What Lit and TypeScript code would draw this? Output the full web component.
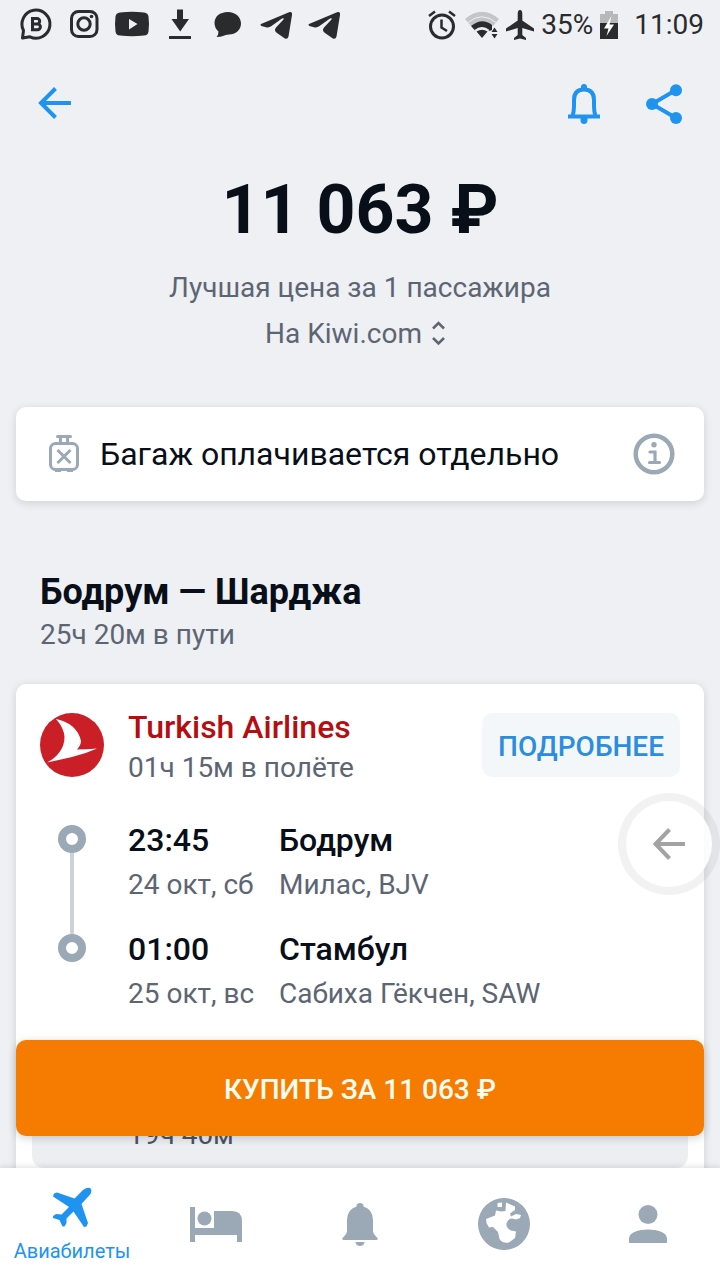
import { LitElement, html, css, svg } from "lit";
import { customElement } from "lit/decorators.js";

const icon = (w: number, h: number, body: unknown) =>
  html`<svg width=${w} height=${h} viewBox="0 0 ${w} ${h}" fill="currentColor" aria-hidden="true">${body}</svg>`;

const telegram = svg`<path d="M9 24 37 12.200Q40.500 11 40 15L36.500 36.500Q35.500 39.800 32.500 38.200L25 33Q21.500 30.500 24 27.500L31.500 19.500Q32.500 17.500 30 18.500L19.500 26Q17 28 14 27.200L9.500 26Q7.500 25 9 24Z"/>`;

const statusLeft = [
  svg`<path d="M10.500 38 11.500 30.500A14 14 0 1 1 18 36.800Z" fill="none" stroke="currentColor" stroke-width="3" stroke-linejoin="round"/>
      <path d="M20.500 18.500H25a2.700 2.700 0 0 1 0 5.400H20.500ZM20.500 23.900H25.500a2.900 2.900 0 0 1 0 5.800H20.500Z" fill="none" stroke="currentColor" stroke-width="3"/>`,
  svg`<rect x="11.500" y="11.500" width="25.500" height="25" rx="7" fill="none" stroke="currentColor" stroke-width="3"/>
      <circle cx="24" cy="24" r="6.200" fill="none" stroke="currentColor" stroke-width="3"/><circle cx="31.500" cy="16.500" r="1.800"/>`,
  svg`<path fill-rule="evenodd" d="M12 12.500Q24 11 36 12.500 40 13 40.500 16.500 41.500 24 40.500 31.500 40 35.300 36 35.600 24 36.700 12 35.600 8 35.300 7.500 31.500 6.500 24 7.500 16.500 8 13 12 12.500ZM21 19V29.500L29.500 24Z"/>`,
  svg`<path d="M21 9.500H27V19H33L24.200 31.500 15.500 19H21ZM13 36H35V39H13Z"/>`,
  svg`<path d="M24 12C31.500 12 37 17 37 23.500S31.500 34.500 25 34.500Q21.500 34.800 19 36 16.500 37 12.500 37 14.500 35 14.500 31.500 10.500 28 10.500 23 11 12.500 24 12Z"/>`,
  telegram,
  telegram,
];

const statusPlane = svg`<path d="M14 0C15.800 0 16.300 2 16.300 4V10.500L28 18.500V21.500L16.300 18V25L20 28V30L14 28.500 8 30V28L11.700 25V18L0 21.500V18.500L11.700 10.500V4C11.700 2 12.200 0 14 0Z"/>`;

const tabs = [
  { label: "Авиабилеты", w: 40, h: 40, body: svg`<path d="M31 3Q35 0 38 1 40.500 3 38.500 7L29.500 17 36 36 34.500 39.500 32 40 21.500 24.500 14.500 31.500V36L12.500 39.500 10.500 39.500 7.500 33 1 31 1 29 4 27 9.500 27.500 17 20 1 9.500 2 6.500 5 5.500 22.500 11.500Z"/>` },
  { label: "Отели", w: 52, h: 36, body: svg`<path d="M0 1H5V22H24V5H42Q52 5 52 15V36H47V29H5V36H0Z"/><circle cx="14.500" cy="12.500" r="7"/>` },
  { label: "Уведомления", w: 36, h: 46, body: svg`<path d="M14.500 5.500Q14.500 2 18 2T21.500 5.500Q31 8.500 31 19V30Q31 33 35.500 37V39H.5V37Q5 33 5 30V19Q5 8.500 14.500 5.500ZM13.500 41H22.500Q22 45 18 45T13.500 41Z"/>` },
  { label: "Путеводитель", w: 52, h: 52, body: svg`<path fill-rule="evenodd" d="M26 0a26 26 0 1 1 0 52a26 26 0 0 1 0-52ZM19.500 5V9H24V4.500ZM28 4.500 27.500 13 23 13.500 18 12.500 17 17.500 8 21 8.500 25 11 29.500 15 29 20 34 21.500 41Q25 46 31 44.500L37 40 38 33.500 33 32.500Q28 30 28.500 25.500 29.500 21 34 20.500L38 21.500 42 20 43 17 38 16 33 18.500 32 15.500 37 12 37 8.500Z"/>` },
  { label: "Профиль", w: 38, h: 38, body: svg`<circle cx="19" cy="9.500" r="9.500"/><path d="M0 38V33.500C0 27.500 9.500 24.500 19 24.500S38 27.500 38 33.500V38Z"/>` },
];

const stops = [
  { time: "23:45", date: "24 окт, сб", city: "Бодрум", airport: "Милас, BJV" },
  { time: "01:00", date: "25 окт, вс", city: "Стамбул", airport: "Сабиха Гёкчен, SAW" },
];

@customElement("app-root")
export class AppRoot extends LitElement {
  static styles = css`
    :host {
      display: flex;
      flex-direction: column;
      height: 100vh;
      overflow: hidden;
      background: #eef0f3;
      color: #080f18;
      font-family: Roboto, "Noto Sans", sans-serif;
      font-size: 28px;
      line-height: 32px;
      --muted: #9ba8b5;
    }
    * { box-sizing: border-box; }
    svg { display: block; flex: none; }
    button { border: 0; padding: 0; background: none; font: inherit; color: inherit; cursor: pointer; }
    h1, h2, h3, p, ol { margin: 0; padding: 0; list-style: none; }
    .status {
      display: flex;
      justify-content: space-between;
      align-items: center;
      height: 48px;
      padding: 0 16px 0 12px;
      color: #292b2d;
      flex: none;
    }
    .status-icons { display: flex; }
    .status-info { display: flex; align-items: center; gap: 7px; padding-top: 2px; }
    .status-info .clock { margin-left: 7px; }
    .main { position: relative; flex: 1; min-height: 0; }
    .scroll { height: 100%; overflow: hidden; }
    .toolbar {
      display: flex;
      align-items: center;
      gap: 43px;
      height: 112px;
      padding: 0 37px 0 36px;
      color: #1e93f0;
    }
    .toolbar .back { margin-right: auto; }
    .summary { display: flex; flex-direction: column; align-items: center; color: #5d6573; }
    .price { font-size: 68px; line-height: 80px; font-weight: 700; color: #080f18; margin: 10px 0 22px; }
    .agency { display: flex; align-items: center; gap: 9px; margin-top: 14px; }
    .card {
      margin: 0 16px;
      border-radius: 10px;
      background: #fff;
      box-shadow: 0 2px 8px rgba(20, 30, 40, 0.14);
    }
    .baggage {
      display: flex;
      align-items: center;
      gap: 20px;
      height: 94px;
      margin-top: 57px;
      padding: 0 29px 0 32px;
      font-size: 32px;
    }
    .baggage p { flex: 1; }
    .baggage svg { color: var(--muted); }
    .route { padding: 71px 40px 33px; color: #5d6573; }
    .route h2 { font-size: 36px; line-height: 40px; font-weight: 700; color: #080f18; margin-bottom: 7px; }
    .flight { padding: 29px 16px 24px; }
    .carrier { display: flex; align-items: flex-start; gap: 24px; height: 64px; padding: 0 8px; }
    .carrier div { flex: 1; color: #5d6573; }
    .carrier h3 { font-size: 32px; line-height: 32px; font-weight: 500; color: #b50d10; margin: -2px 0 9px; }
    .details {
      height: 64px;
      padding: 3px 16px 0;
      border-radius: 10px;
      background: #f4f7f9;
      color: #2b8de0;
      font-weight: 500;
    }
    .stops { padding: 44px 0 28px; }
    .stop { display: grid; grid-template-columns: 96px 151px 1fr; height: 109px; }
    .stop dl, .stop dt, .stop dd { margin: 0; }
    .stop dt { font-size: 32px; line-height: 38px; font-weight: 500; margin-bottom: 10px; }
    .stop dd { color: #5d6573; white-space: nowrap; }
    .rail { display: flex; flex-direction: column; align-items: center; width: 80px; padding-top: 4px; }
    .dot { width: 28px; height: 28px; border: 8px solid var(--muted); border-radius: 50%; flex: none; }
    .line { width: 4px; flex: 1; background: #ccd2d7; margin-bottom: -4px; }
    .stop:last-child { height: 86px; }
    .layover { height: 124px; padding: 75px 96px 0; border-radius: 12px; background: #eceef1; color: #4d535c; }
    .buy {
      position: absolute;
      left: 16px;
      right: 16px;
      bottom: 32px;
      height: 96px;
      padding-top: 3px;
      border-radius: 10px;
      background: #f67c01;
      color: #fffdf0;
      font-weight: 500;
      box-shadow: 0 2px 8px rgba(20, 30, 40, 0.2);
    }
    .float {
      position: absolute;
      right: 0;
      bottom: 273px;
      width: 102px;
      height: 102px;
      display: grid;
      place-items: center;
      border: 8px solid rgba(90, 90, 100, 0.08);
      border-radius: 50%;
      background: rgba(255, 255, 255, 0.85);
      background-clip: padding-box;
      color: #a3a3a3;
    }
    .tabs {
      position: relative;
      display: grid;
      grid-template-columns: repeat(5, 1fr);
      height: 112px;
      flex: none;
      background: #fff;
      box-shadow: 0 -1px 6px rgba(20, 30, 40, 0.14);
    }
    .tab {
      display: flex;
      flex-direction: column;
      align-items: center;
      justify-content: center;
      gap: 12px;
      color: var(--muted);
      font-size: 20px;
      line-height: 24px;
      text-decoration: none;
    }
    .tab.active { color: #1e93f0; padding-top: 2px; }
  `;

  render() {
    return html`
      <div class="status">
        <div class="status-icons">${statusLeft.map((b) => icon(48, 48, b))}</div>
        <div class="status-info">
          ${icon(30, 30, svg`<circle cx="14" cy="16.500" r="11.500" fill="none" stroke="currentColor" stroke-width="3"/><path d="M13.500 9.500V17.500L19 21M1 6 7 1.500M21 1.500 27 6" fill="none" stroke="currentColor" stroke-width="2.500"/>`)}
          ${icon(34, 28, svg`<path d="M0 8Q17-6.500 34 8L28 15Q17 6 6 15Z" fill="#c3c5c8"/><path d="M3 11.500Q17 0 31 11.500" fill="none" stroke="#eef0f3" stroke-width="1"/><path d="M6 15Q17 6 27 14V19L24 20Q17 14 10 19.500ZM11.500 20.500Q17 17 22.500 20.500L17 27ZM29.500 16.500 32.500 21H26.500ZM26.500 23H32.500L29.500 27.500Z"/><path d="M10 19.500Q17 14 24 19.500" fill="none" stroke="#eef0f3" stroke-width="1.500"/>`)}
          ${icon(28, 30, statusPlane)}
          <span>35%</span>
          ${icon(20, 30, svg`<path d="M0 4H5V1H13V4H18V13H0Z" fill="#b6b8ba"/><path d="M0 13H18V29H0Z"/><path d="M11.500 6 4 18.500H8.500L6.500 26 14 14.500H9.500Z" fill="#fff"/>`)}
          <span class="clock">11:09</span>
        </div>
      </div>

      <div class="main">
        <div class="scroll">
          <div class="toolbar">
            <button class="back" aria-label="Назад">${icon(36, 36, svg`<path d="M35 17H6M19.500 2.500 5 17 19.500 31.500" fill="none" stroke="currentColor" stroke-width="4"/>`)}</button>
            <button aria-label="Подписаться">${icon(36, 40, svg`<path d="M6.500 32Q8 28 8 22V16C8 8.500 12 5.500 18 5.500S28 8.500 28 16V22Q28 28 29.500 32" fill="none" stroke="currentColor" stroke-width="4"/><path d="M2 30.500H34V34.500H2ZM14.500 34H21.500V37Q21 40 18 40T14.500 37ZM15 7V3Q15 0 18 0T21 3V7Z"/>`)}</button>
            <button aria-label="Поделиться">${icon(38, 40, svg`<path d="M31 6 7 20 31 34" fill="none" stroke="currentColor" stroke-width="4"/><circle cx="31" cy="6.200" r="6"/><circle cx="7" cy="20" r="6"/><circle cx="31" cy="34" r="6"/>`)}</button>
          </div>
          <div class="summary">
            <h1 class="price">11 063 ₽</h1>
            <p>Лучшая цена за 1 пассажира</p>
            <button class="agency">На Kiwi.com ${icon(24, 26, svg`<path d="M2 7.500 7.500 2 13 7.500M2 17 7.500 22.500 13 17" fill="none" stroke="currentColor" stroke-width="2.500"/>`)}</button>
          </div>

          <section class="card baggage">
            ${icon(32, 40, svg`<g fill="none" stroke="currentColor" stroke-width="3"><rect x="2.500" y="9.500" width="27" height="26" rx="5"/><path d="M9.500 2.500H22.500M12.500 3V9M19.500 3V9" stroke-linecap="round"/><path d="M9.500 16 22.500 29M22.500 16 9.500 29"/></g><path d="M7 36H13V38H7ZM19 36H25V38H19Z"/>`)}
            <p>Багаж оплачивается отдельно</p>
            <button aria-label="О багаже">${icon(42, 42, svg`<circle cx="21" cy="21" r="18.300" fill="none" stroke="currentColor" stroke-width="4.500"/><circle cx="21" cy="11.700" r="2.700"/><path d="M17 19H22V29.500M16.500 29.500H26.500" fill="none" stroke="currentColor" stroke-width="3.200" stroke-linecap="round"/>`)}</button>
          </section>

          <header class="route">
            <h2>Бодрум — Шарджа</h2>
            <p>25ч 20м в пути</p>
          </header>

          <section class="card flight">
            <div class="carrier">
              ${icon(64, 64, svg`<circle cx="32" cy="32" r="32" fill="#cb1f27"/><path d="M16 6Q26 8 32.500 13.500 39 19 41 28 41 32 37 36.500 47 36.500 57 35.500 45 41 32 44 19 47 7 49.500 15 45.500 20 38.500 24.500 32 24.500 24 24 15 16 6Z" fill="#fff"/>`)}
              <div>
                <h3>Turkish Airlines</h3>
                <p>01ч 15м в полёте</p>
              </div>
              <button class="details">ПОДРОБНЕЕ</button>
            </div>
            <ol class="stops">
              ${stops.map((s, i) => html`
                <li class="stop">
                  <span class="rail"><span class="dot"></span>${i < stops.length - 1 ? html`<span class="line"></span>` : ""}</span>
                  <dl><dt>${s.time}</dt><dd>${s.date}</dd></dl>
                  <dl><dt>${s.city}</dt><dd>${s.airport}</dd></dl>
                </li>`)}
            </ol>
            <div class="layover">19ч 40м</div>
          </section>
        </div>
        <button class="float" aria-label="Назад">${icon(34, 34, svg`<path d="M33 17H4M17.500 2.500 3.500 17 17.500 31.500" fill="none" stroke="currentColor" stroke-width="4"/>`)}</button>
        <button class="buy">КУПИТЬ ЗА 11 063 ₽</button>
      </div>

      <nav class="tabs">
        ${tabs.map((t, i) => html`
          <a class="tab ${i === 0 ? "active" : ""}" href="#" aria-label=${t.label}>
            ${icon(t.w, t.h, t.body)}${i === 0 ? html`<span>${t.label}</span>` : ""}
          </a>`)}
      </nav>
    `;
  }
}
